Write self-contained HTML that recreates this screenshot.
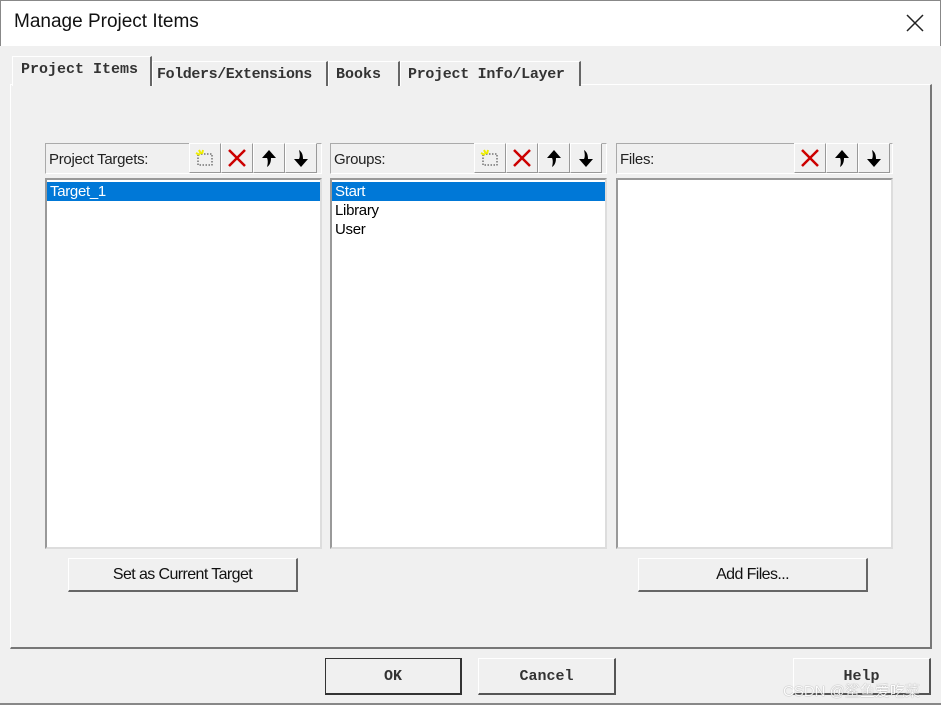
<!DOCTYPE html><html><head><style>
*{box-sizing:border-box;margin:0;padding:0}
body{width:941px;height:705px;background:#f0f0f0;position:relative;overflow:hidden;font-family:"Liberation Sans",sans-serif}
.a{position:absolute}
.title{left:0;top:0;width:941px;height:46px;background:#fff;border:1px solid #888;border-bottom:none}
.tab{font-family:"Liberation Mono",monospace;font-size:15px;font-weight:bold;color:#333;border:1px solid #fff;border-right:2px solid #666;border-bottom:none;padding:4px 0 0 4px;background:#f0f0f0;letter-spacing:0px}
.panel{border-top:1px solid #fff;border-left:1px solid #fff;border-right:2px solid #777;border-bottom:2px solid #777}
.hdr{border:1px solid #aaa;border-right-color:#fff;border-bottom-color:#fff;font-size:15px;color:#222;padding:7px 3px;letter-spacing:-0.3px}
.list{background:#fff;border:2px solid #999;border-right-color:#ddd;border-bottom-color:#ddd;font-size:15px;letter-spacing:-0.3px;padding-top:2px}
.sel{background:#0078d7;color:#fff;padding-left:3px;height:19px;line-height:19px}
.it{padding-left:3px;height:19px;line-height:19px}
.ib{width:32px;height:30px;border-left:1px solid #fff;border-right:1px solid #999;border-top:1px solid #fff;border-bottom:1px solid #999;display:flex;align-items:center;justify-content:center}
.btn{border:1px solid #fff;border-right:2px solid #666;border-bottom:2px solid #666;font-size:16px;text-align:center;color:#111;letter-spacing:-0.6px}
.mb{font-family:"Liberation Mono",monospace;font-size:15px;font-weight:bold;color:#333;text-align:center;border:1px solid #fff;border-right:2px solid #555;border-bottom:2px solid #555}
</style></head><body>
<div class="a title"></div>
<div class="a" style="left:14px;top:11px;font-size:19px;color:#111">Manage Project Items</div>
<svg class="a" style="left:906px;top:14px" width="18" height="18"><path d="M1 1L17 17M17 1L1 17" stroke="#222" stroke-width="1.5"/></svg>
<div class="a panel" style="left:10px;top:84px;width:922px;height:565px"></div>
<div class="a tab" style="left:152px;top:61px;width:176px;height:25px;letter-spacing:-0.4px">Folders/Extensions</div>
<div class="a tab" style="left:328px;top:61px;width:72px;height:25px;padding-left:7px">Books</div>
<div class="a tab" style="left:400px;top:61px;width:181px;height:25px;padding-left:7px;letter-spacing:-0.3px">Project Info/Layer</div>
<div class="a tab" style="left:12px;top:56px;width:140px;height:30px;border-bottom:none;z-index:2;padding-top:4px;padding-left:8px">Project Items</div>

<div class="a hdr" style="left:45px;top:143px;width:277px;height:31px">Project Targets:</div>
<div class="a hdr" style="left:330px;top:143px;width:277px;height:31px">Groups:</div>
<div class="a hdr" style="left:616px;top:143px;width:277px;height:31px">Files:</div>

<div class="a list" style="left:45px;top:178px;width:277px;height:371px"><div class="sel">Target_1</div></div>
<div class="a list" style="left:330px;top:178px;width:277px;height:371px"><div class="sel">Start</div><div class="it">Library</div><div class="it">User</div></div>
<div class="a list" style="left:616px;top:178px;width:277px;height:371px"></div>

<div class="a" style="left:189px;top:143px;display:flex">
<div class="ib"><svg width="22" height="20"><rect x="4" y="6" width="14" height="11" fill="none" stroke="#333" stroke-dasharray="1.5 1.5"/><path d="M5 2l2 4M2 5l4 2M9 2l-1 4" stroke="#ee0" stroke-width="2"/></svg></div>
<div class="ib"><svg width="22" height="22"><path d="M3 3L19 19M19 3L3 19" stroke="#c00" stroke-width="2.5"/></svg></div>
<div class="ib"><svg width="20" height="20"><path d="M10 2L17 10H12C12 14 11 17 8 19C9 15 9 12 8 10H3Z" fill="#000"/></svg></div>
<div class="ib"><svg width="20" height="20"><path d="M10 19L17 11H12C12 7 11 4 8 2C9 6 9 9 8 11H3Z" fill="#000"/></svg></div>
</div>
<div class="a" style="left:474px;top:143px;display:flex">
<div class="ib"><svg width="22" height="20"><rect x="4" y="6" width="14" height="11" fill="none" stroke="#333" stroke-dasharray="1.5 1.5"/><path d="M5 2l2 4M2 5l4 2M9 2l-1 4" stroke="#ee0" stroke-width="2"/></svg></div>
<div class="ib"><svg width="22" height="22"><path d="M3 3L19 19M19 3L3 19" stroke="#c00" stroke-width="2.5"/></svg></div>
<div class="ib"><svg width="20" height="20"><path d="M10 2L17 10H12C12 14 11 17 8 19C9 15 9 12 8 10H3Z" fill="#000"/></svg></div>
<div class="ib"><svg width="20" height="20"><path d="M10 19L17 11H12C12 7 11 4 8 2C9 6 9 9 8 11H3Z" fill="#000"/></svg></div>
</div>
<div class="a" style="left:794px;top:143px;display:flex">
<div class="ib"><svg width="22" height="22"><path d="M3 3L19 19M19 3L3 19" stroke="#c00" stroke-width="2.5"/></svg></div>
<div class="ib"><svg width="20" height="20"><path d="M10 2L17 10H12C12 14 11 17 8 19C9 15 9 12 8 10H3Z" fill="#000"/></svg></div>
<div class="ib"><svg width="20" height="20"><path d="M10 19L17 11H12C12 7 11 4 8 2C9 6 9 9 8 11H3Z" fill="#000"/></svg></div>
</div>

<div class="a btn" style="left:68px;top:558px;width:230px;height:34px;line-height:32px">Set as Current Target</div>
<div class="a btn" style="left:638px;top:558px;width:230px;height:34px;line-height:32px">Add Files...</div>

<div class="a mb" style="left:325px;top:658px;width:137px;height:37px;line-height:35px;border:1px solid #333;border-right:2px solid #333;border-bottom:2px solid #333">OK</div>
<div class="a mb" style="left:478px;top:658px;width:138px;height:37px;line-height:35px">Cancel</div>
<div class="a mb" style="left:793px;top:658px;width:138px;height:37px;line-height:35px">Help</div>
<div class="a" style="left:783px;top:680px;font-size:15px;color:#fff;opacity:.85;font-family:'Liberation Sans','Noto Sans CJK SC',sans-serif;text-shadow:0 0 1px #666">CSDN @鲨鱼爱吃菜</div>
<div class="a" style="left:0;top:703px;width:941px;height:2px;background:#888"></div>
</body></html>
